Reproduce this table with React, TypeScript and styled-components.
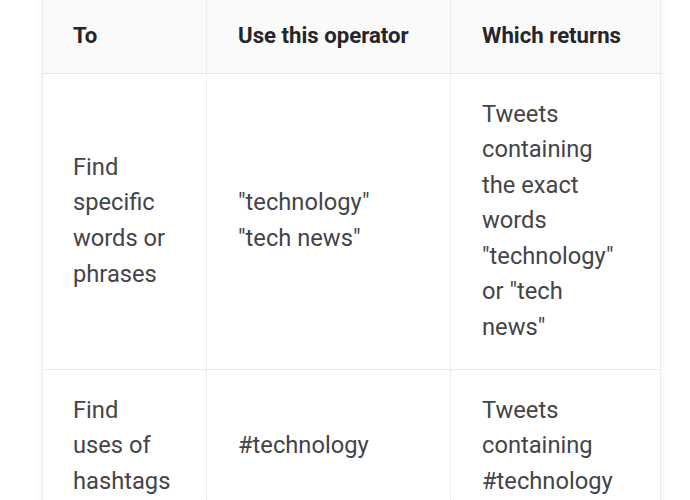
import styled, { createGlobalStyle } from "styled-components";

const GlobalStyle = createGlobalStyle`
  html, body {
    margin: 0;
    padding: 0;
    background: #ffffff;
  }
  body {
    font-family: Roboto, "Liberation Sans", sans-serif;
    overflow: hidden;
  }
`;

const Page = styled.div`
  width: 690px;
  height: 500px;
  padding-left: 42px;
  box-sizing: border-box;
`;

const Table = styled.table`
  width: 618px;
  table-layout: fixed;
  border-collapse: collapse;
  border-left: 1px solid #ebebeb;
  border-right: 1px solid #ebebeb;
  box-shadow: 0 0 10px rgba(0, 0, 0, 0.05);
  line-height: 35.6px;
`;

const HeadRow = styled.tr`
  background: #fafafa;
  border-bottom: 1px solid #e6e6e6;
`;

const Row = styled.tr`
  border-bottom: 1px solid #ebebeb;
`;

const Th = styled.th`
  height: 73px;
  padding: 0 32px 0 30px;
  text-align: left;
  vertical-align: middle;
  font-size: 22.2px;
  font-weight: 700;
  color: #25252a;
  box-sizing: border-box;
  & + & {
    border-left: 1px dotted #e2e2e2;
    padding-left: 31px;
  }
`;

const Td = styled.td`
  padding: 23px 32px 23px 30px;
  vertical-align: middle;
  font-size: 23.7px;
  color: #444449;
  & + & {
    border-left: 1px dotted #e2e2e2;
    padding-left: 31px;
  }
`;

const rows = [
  {
    to: "Find specific words or phrases",
    op: '"technology" "tech news"',
    returns: 'Tweets containing the exact words "technology" or "tech news"',
  },
  {
    to: "Find uses of hashtags",
    op: "#technology",
    returns: "Tweets containing #technology",
  },
];

export default function App() {
  return (
    <Page>
      <GlobalStyle />
      <Table>
        <colgroup>
          <col style={{ width: 164 }} />
          <col style={{ width: 244 }} />
          <col style={{ width: 210 }} />
        </colgroup>
        <thead>
          <HeadRow>
            <Th>To</Th>
            <Th>Use this operator</Th>
            <Th>Which returns</Th>
          </HeadRow>
        </thead>
        <tbody>
          {rows.map((r) => (
            <Row key={r.op}>
              <Td>{r.to}</Td>
              <Td>{r.op}</Td>
              <Td>{r.returns}</Td>
            </Row>
          ))}
        </tbody>
      </Table>
    </Page>
  );
}
